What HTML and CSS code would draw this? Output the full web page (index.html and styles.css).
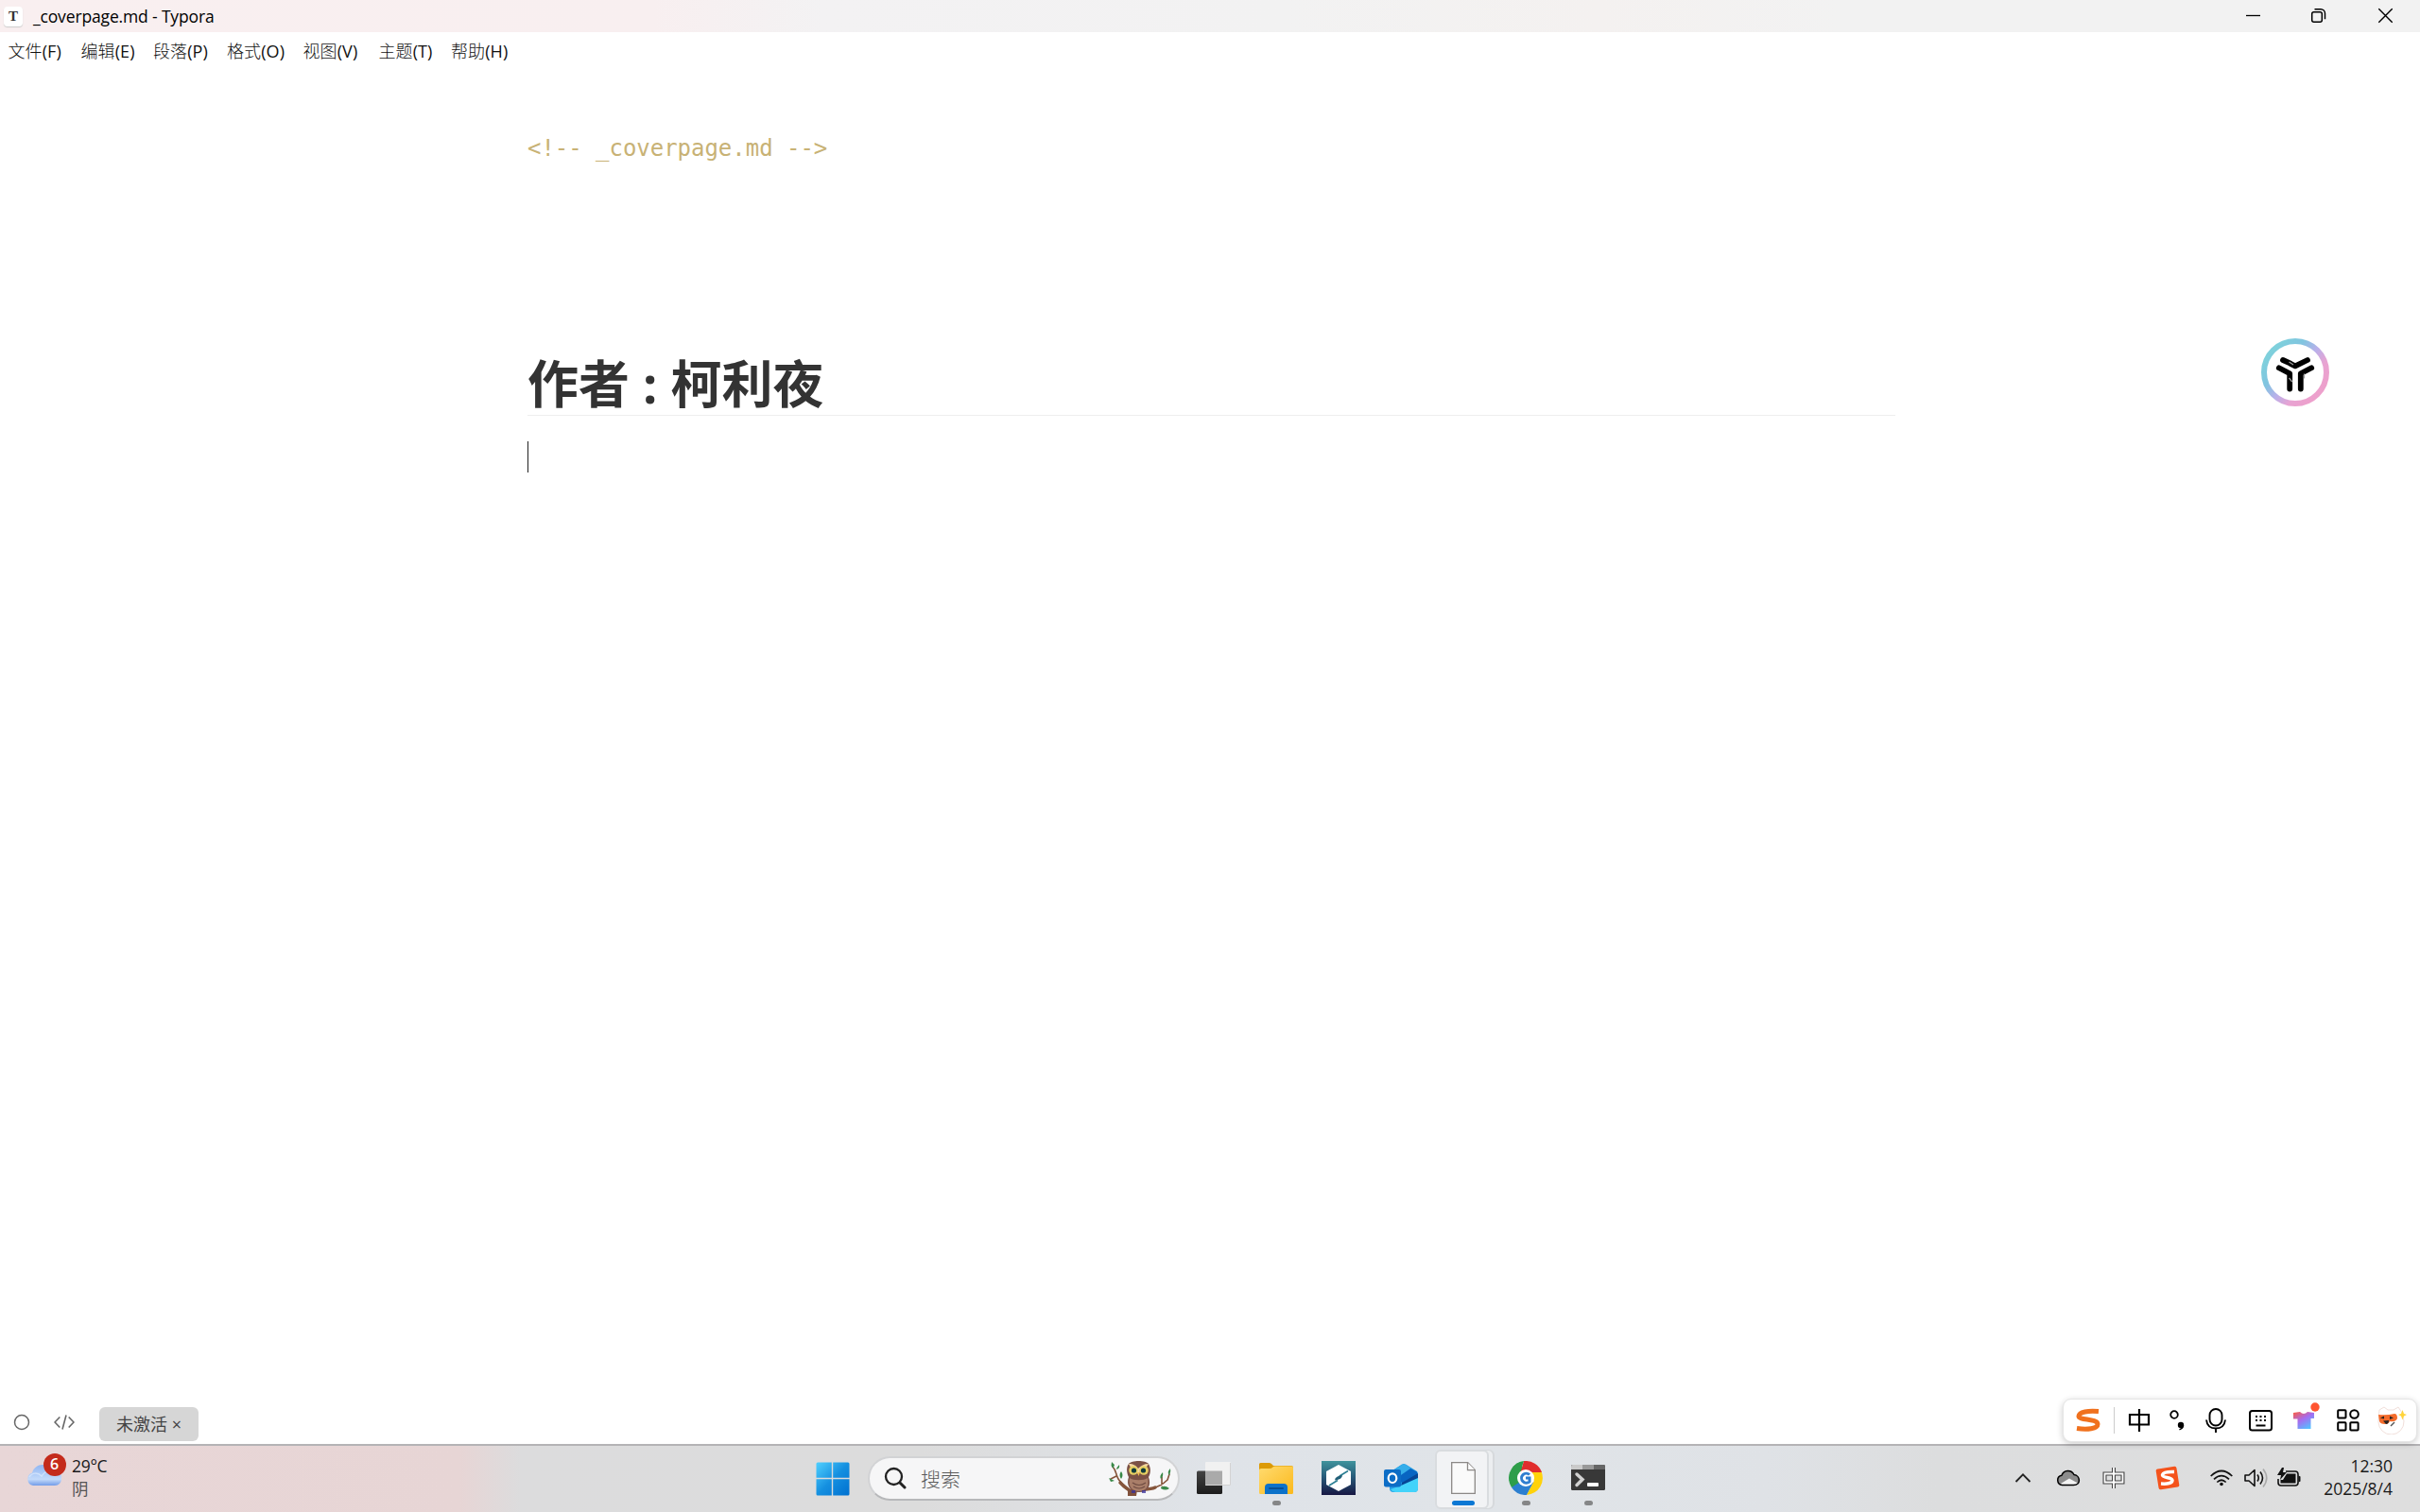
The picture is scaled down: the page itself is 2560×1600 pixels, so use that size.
FILE: index.html
```html
<!DOCTYPE html>
<html lang="zh-CN">
<head>
<meta charset="utf-8">
<title>_coverpage.md - Typora</title>
<link rel="stylesheet" href="styles.css">
</head>
<body>
<div class="screen">
  <header class="titlebar">
    <span class="app-icon">T</span>
    <span class="title">_coverpage.md - Typora</span>
    <div class="window-controls">
      <svg width="70" height="34" viewBox="0 0 70 34"><path d="M27 16.500h15" stroke="#000" stroke-width="1.300"/></svg>
      <svg width="71" height="34" viewBox="0 0 71 34" fill="none" stroke="#000" stroke-width="1.500"><rect x="26.700" y="12.700" width="10.600" height="10.600" rx="2"/><path d="M29.500 9.800h6.500a4.500 4.500 0 0 1 4.500 4.500v6"/></svg>
      <svg width="70" height="34" viewBox="0 0 70 34"><path d="M26.300 9.300l14.400 14.400m0-14.400l-14.400 14.400" stroke="#000" stroke-width="1.400"/></svg>
    </div>
  </header>
  <nav class="menu">
    <span>文件(F)</span><span>编辑(E)</span><span>段落(P)</span><span>格式(O)</span><span>视图(V)</span><span>主题(T)</span><span>帮助(H)</span>
  </nav>
  <main class="editor">
    <article class="page">
      <div class="comment">&lt;!-- _coverpage.md --&gt;</div>
      <h1>作者 : 柯利夜</h1>
      <div class="caret"></div>
    </article>
    <svg class="assistant" width="72" height="72" viewBox="0 0 72 72" fill="none">
      <defs><linearGradient id="ring" x1="0.1" y1="0.2" x2="0.85" y2="0.85"><stop offset="0" stop-color="#7fd0dc"/><stop offset=".28" stop-color="#80c4e0"/><stop offset=".52" stop-color="#b9b0ea"/><stop offset=".76" stop-color="#e8a3d2"/><stop offset="1" stop-color="#eda0cc"/></linearGradient></defs>
      <circle cx="36" cy="36" r="33" stroke="url(#ring)" stroke-width="6"/>
      <g stroke="#000" stroke-width="5.800" stroke-linecap="round" stroke-linejoin="round">
        <path d="M23 23L31 26.700M49 23L36 29.300L31 26.800"/>
        <path d="M18.800 31.300L30.200 37.300V53.500"/>
        <path d="M53.200 31.300L41.800 37.300V53.500"/>
      </g>
      <path d="M29.500 25l4.500 3M29.500 42l3.200 4M45.500 37.500v5" stroke="#999" stroke-width="1.300"/>
    </svg>
  </main>
  <footer class="status">
    <svg class="outline-icon" width="18" height="18" viewBox="0 0 18 18"><circle cx="9" cy="9" r="7.500" fill="none" stroke="#666" stroke-width="1.500"/></svg>
    <svg class="source-icon" width="22" height="18" viewBox="0 0 22 18" fill="none" stroke="#666" stroke-width="1.600"><path d="M6.300 3.500L1 9l5.300 5.500M15.700 3.500L21 9l-5.300 5.500M13 1.500L9 16.500"/></svg>
    <span class="license">未激活 <i>×</i></span>
  </footer>
  <div class="taskbar">
    <div class="weather">
      <svg width="40" height="38" viewBox="0 0 40 38">
        <defs><linearGradient id="cloud" x1="0" y1="0" x2="0" y2="1"><stop offset="0" stop-color="#8fb5f2"/><stop offset=".7" stop-color="#c3dafa"/><stop offset="1" stop-color="#729ce8"/></linearGradient></defs>
        <path d="M7 36a7 7 0 0 1-1-13.500C9 12 22 11 26 20c7-2 12 3 11 9 0 4-3 7-7 7z" fill="url(#cloud)"/>
        <path d="M3 27c3-5 9-5 13-1 3-5 9-7 14-5" fill="none" stroke="#dbeafd" stroke-width="1.500" opacity=".7"/>
      </svg>
      <b class="badge">6</b>
      <div class="weather-text"><span>29°C</span><span class="cond">阴</span></div>
    </div>
    <div class="apps">
      <svg class="start" width="36" height="36" viewBox="0 0 36 36">
        <defs><linearGradient id="win" x1="0" y1="0" x2="1" y2="1"><stop offset="0" stop-color="#4fd0ff"/><stop offset=".5" stop-color="#1590e0"/><stop offset="1" stop-color="#0070d0"/></linearGradient></defs>
        <path d="M2 .5h14.800v16.300H.5V2A1.500 1.500 0 0 1 2 .5zM18.200 .5H34A1.500 1.500 0 0 1 35.500 2v14.800H18.200zM.5 18.200h16.300v17.300H2A1.500 1.500 0 0 1 .5 34zM18.200 18.200h17.300V34a1.500 1.500 0 0 1-1.500 1.500H18.200z" fill="url(#win)"/>
      </svg>
      <div class="search">
        <svg width="24" height="24" viewBox="0 0 24 24" fill="none" stroke="#222" stroke-linecap="round"><circle cx="10.500" cy="10.500" r="8.500" stroke-width="2.300"/><path d="M17 17l5 5" stroke-width="3"/></svg>
        <span>搜索</span>
        <svg class="owl" width="68" height="38" viewBox="0 0 68 38">
          <g fill="none" stroke="#85553b" stroke-linecap="round"><path d="M5 7c4 4 3 8 6 13s9 8 14 14" stroke-width="1.600"/><path d="M22 34c5-4 14-1 22-3s13-4 19-10l2-6M57 27V18M9 17L3 20" stroke-width="1.600"/><path d="M13 24c4 5 7 6 13 10M24 34c8-5 18-1 26-5" stroke-width="3.500"/></g>
          <path d="M21 31h10l-1 7h-9z" fill="#80513c"/>
          <path d="M22 4c3-4 18-4 21 0 3 5 2 11 0 14 3 8 0 16-10 16S19 26 22 18c-2-4-3-10 0-14z" fill="#7b5145"/>
          <path d="M23 19c4 3 15 3 19 0 2 9-2 14-9 14s-12-5-10-14z" fill="#a97e69"/><path d="M26 24q7 5 14 0M27 28q6 4 12 0" stroke="#6f4c42" fill="none" stroke-width="1.200"/>
          <path d="M22 4c5 0 8 2 10 5 3-3 6-5 11-5-2 4-5 5-7 6l-4 5-4-5c-3-1-5-3-6-6z" fill="#f4d7a5"/>
          <circle cx="27" cy="11" r="4.800" fill="#e6cf62"/><circle cx="38" cy="11" r="4.800" fill="#e6cf62"/><circle cx="27.500" cy="11" r="2.600" fill="#123b3b"/><circle cx="37.500" cy="11" r="2.600" fill="#123b3b"/><path d="M31 13h3l-1.500 4z" fill="#f0c050"/>
          <path d="M26 32v3m2-3v3m9-3v3m2-3v3" stroke="#39309c" stroke-width="1.500"/>
          <g fill="#398848"><path d="M4 2l3 3-1.500 4-2-3zM12 5q-3 3-3 5 4-1 3-5zM14 12q-3 4 0 8 3-4 0-8zM1 19l6 3-4 1zM58 13q-4 4-2 7 3-3 2-7zM66 9q-4 4-1 7 2-4 1-7zM56 29q4-3 9 1-4 3-9 0z"/></g>
        </svg>
      </div>
      <div class="app"><svg width="36" height="36" viewBox="0 0 36 36"><defs><linearGradient id="tv" x1="0" y1="0" x2="0" y2="1"><stop stop-color="#444"/><stop offset="1" stop-color="#1c1c1c"/></linearGradient></defs><rect x="0" y="10.500" width="27" height="24.500" rx="1.500" fill="url(#tv)"/><rect x="9" y="1" width="27" height="25" rx="1" fill="#f1f1f1"/><path d="M9 10.500h18V26H9z" fill="#aaa"/><path d="M9.500 25.500h26V2" stroke="#d3d3d3" fill="none"/></svg></div>
      <div class="app running"><svg width="36" height="36" viewBox="0 0 36 36"><defs><linearGradient id="fold" x1="0" y1="0" x2="1" y2="1"><stop stop-color="#ffdb70"/><stop offset="1" stop-color="#fbb91c"/></linearGradient></defs><path d="M0 3.500Q0 2 1.500 2h9q1.500 0 2.500 1l2 2h19q2 0 2 2v8H0z" fill="#dc9a06"/><path d="M0 9.500Q0 8 2 8h9q2 0 3.500-1.500T18 5.500h16.500q1.500 0 1.500 1.500v26.500q0 1.500-1.500 1.500h-33Q0 35 0 33.500z" fill="url(#fold)"/><path d="M6 35v-7q0-4 4-4h16q4 0 4 4v7z" fill="#0c72c9"/><path d="M11 29h14" stroke="#074f94" stroke-width="2" stroke-linecap="round"/></svg></div>
      <div class="app"><svg width="36" height="36" viewBox="0 0 36 36"><defs><linearGradient id="teal" x1="0" y1="0" x2="0" y2="1"><stop stop-color="#3f939c"/><stop offset=".45" stop-color="#285d7b"/><stop offset="1" stop-color="#171743"/></linearGradient></defs><path d="M0 0h36v36H0z" fill="url(#teal)"/><path d="M18 4l13 7v14l-13 7-13-7V11z" fill="#fff"/><path d="M8 26l9-5.500M28 10.500L19 16" fill="none" stroke="#2b7f93" stroke-width="1.600"/><path d="M14 20.500q0-4.500 8-5.500 0 4.500-8 5.500z" fill="#226078"/></svg></div>
      <div class="app"><svg width="36" height="36" viewBox="0 0 36 36"><path d="M6 18V12L19 3.500q2-1 4 0L35 11q1 1 1 3v15q0 4-4 4H10q-4 0-4-4z" fill="#249fe5"/><path d="M7 12L19 4q2-1 4 0l6 4-17 12z" fill="#35aeea"/><path d="M15 17L28 8l7 3.500v4L20 25z" fill="#0865c2"/><path d="M19 23l17-10v8l-19 10z" fill="#064696"/><path d="M36 18v11q0 4-4 4H12q-3 0-5-3l11-4z" fill="#43d3fa"/><rect x="0" y="9" width="18" height="18.500" rx="2" fill="#0c6dc6"/><ellipse cx="9" cy="18.200" rx="4.300" ry="4.800" fill="none" stroke="#fff" stroke-width="2.200"/></svg></div>
      <div class="app active running"><svg width="26" height="34" viewBox="0 0 26 34"><path d="M.7.7h17l7.600 7.800v24.800H.7z" fill="#fafafa" stroke="#8b8886" stroke-width="1.300"/><path d="M17.500.7v8h8" fill="#fff" stroke="#8b8886" stroke-width="1.300"/></svg></div>
      <div class="app running"><svg width="36" height="36" viewBox="0 0 36 36"><path d="M18 18L12.300 1A18 18 0 0 0 3 28L9 27z" fill="#2e9e4a"/><path d="M18 18L3 28a18 18 0 0 0 16 8l7-13z" fill="#2c7fd0"/><path d="M17 10h17A18 18 0 0 1 19 36l8-15z" fill="#ffd20a"/><path d="M16 .1A18 18 0 0 1 35 12H18l-7 5z" fill="#e12d2d"/><path d="M4 7A18 18 0 0 1 16 .1L10 18z" fill="#2e9e4a"/><circle cx="18" cy="18" r="9" fill="#fff"/><path d="M22 14.500a5 5 0 1 0 0 7.300V18h-4" fill="none" stroke="#2f7ed0" stroke-width="3"/></svg></div>
      <div class="app running"><svg width="36" height="36" viewBox="0 0 36 36"><rect y="4" width="36" height="27" rx="1.500" fill="#383838"/><path d="M0 9V5.500Q0 4 1.500 4H12v5z" fill="#cacaca"/><path d="M12 4h12v5H12z" fill="#999"/><path d="M24 4h10.500Q36 4 36 5.500V9H24z" fill="#666"/><path d="M6 14l6 5.500-6 6" fill="none" stroke="#d2d2d2" stroke-width="3.500" stroke-linecap="round"/><rect x="17" y="23" width="12" height="4" rx="1" fill="#fff"/></svg></div>
    </div>
    <div class="tray">
      <svg width="18" height="12" viewBox="0 0 18 12"><path d="M1.500 10L9 2.300l7.500 7.700" fill="none" stroke="#222" stroke-width="1.800"/></svg>
      <svg class="t-cloud" width="26" height="20" viewBox="0 0 26 20"><path d="M6.500 17.500a5.200 5.200 0 0 1-.5-10.300C8 1.500 16 .8 19 6.500c7 1 7.500 11-.5 11z" fill="#8c8c8c"/><path d="M4 16.500l10-6 9 5q-2 2-5 2H7z" fill="#f4f4f4"/><path d="M6.500 17.500a5.200 5.200 0 0 1-.5-10.300C8 1.500 16 .8 19 6.500c7 1 7.500 11-.5 11z" fill="none" stroke="#000" stroke-width="1.500"/></svg>
      <svg class="t-ime" width="24" height="26" viewBox="0 0 24 26" fill="none"><path d="M2.500 8.500h19v9h-19zM12 2v22" stroke="#444" stroke-width="4"/><path d="M2.500 8.500h19v9h-19zM12 2v22" stroke="#fff" stroke-width="1.800"/></svg>
      <svg class="t-sogou" width="26" height="26" viewBox="0 0 26 26"><rect x="2" y="2" width="22" height="22" rx="2" transform="rotate(-9 13 13)" fill="#f4531c"/><path d="M20 6.500Q8 6 7.500 10c0 3 10 2 10.500 5.500 0 3-5 4-12 3.500" fill="none" stroke="#fff" stroke-width="3.500"/></svg>
      <svg class="t-wifi" width="24" height="20" viewBox="0 0 24 20" fill="none" stroke="#111" stroke-width="1.700"><path d="M.7 8Q12-3 23.300 8M4 11.300q8-7.500 16 0M7.300 14.500q4.700-4.500 9.400 0"/><circle cx="12" cy="16.500" r="1.800" fill="#111" stroke="none"/></svg>
      <svg class="t-vol" width="26" height="22" viewBox="0 0 26 22" fill="none" stroke="#111" stroke-width="1.600"><path d="M1 8h4l6-5.500v17L5 14H1z" stroke-linejoin="round"/><path d="M14 7.500q2.500 3.500 0 7M17 4.500q5 6.500 0 13"/><path d="M20 1.500q7.500 9.500 0 19" stroke="#aaa"/></svg>
      <svg class="t-bat" width="26" height="22" viewBox="0 0 26 22"><path d="M9 4h10q3 0 3 3v9q0 3-3 3H4q-3 0-3-3v-4" fill="none" stroke="#111" stroke-width="1.600"/><path d="M10 6.500h9.500v10h-16V13H6z" fill="#111"/><path d="M22.500 8.500l2 1v5l-2 1zM5 0L0 8h4l-1 5 7-8H6l1-5z" fill="#111"/></svg>
      <div class="clock"><span class="time">12:30</span><span class="date">2025/8/4</span></div>
    </div>
  </div>
  <div class="ime">
    <svg class="i-s" width="28" height="26" viewBox="0 0 28 26"><path d="M25 3.500C14 2.500 4.500 4 4 8.500 3.500 13 24 11 24 17c0 5-11 6-22 4.500" fill="none" stroke="#f0711e" stroke-width="5"/></svg>
    <i class="divider"></i>
    <svg class="i-zh" width="24" height="26" viewBox="0 0 24 26"><path d="M2 7h20v10.500H2zM12 1v24" fill="none" stroke="#000" stroke-width="2.200"/></svg>
    <svg class="i-punct" width="16" height="24" viewBox="0 0 16 24"><circle cx="5" cy="6" r="3.800" fill="none" stroke="#000" stroke-width="1.800"/><circle cx="12" cy="17" r="3.200"/><path d="M15.200 17q0 4-4.500 5.500l-.5-1.200q2.500-1 2.500-2.500z"/></svg>
    <svg class="i-mic" width="22" height="26" viewBox="0 0 22 26" fill="none" stroke="#000" stroke-width="1.900"><rect x="4.500" y="1" width="13" height="17.500" rx="6.500"/><path d="M1 12.500q1 9 10 9t10-9M11 21.500V26"/></svg>
    <svg class="i-kbd" width="25" height="24" viewBox="0 0 25 24"><rect x="1" y="2" width="23" height="20.500" rx="2.500" fill="none" stroke="#000" stroke-width="2"/><path d="M7 8h2m2.500 0h2M16 8h2M7 12h2m2.500 0h2m2.500 0h2M7.500 17.500h10" stroke="#000" stroke-width="1.800"/></svg>
    <svg class="i-shirt" width="28" height="29" viewBox="0 0 28 29"><defs><linearGradient id="shirt" x1="0" y1="0" x2=".7" y2="1"><stop stop-color="#ff5b3b"/><stop offset=".5" stop-color="#a56cf0"/><stop offset="1" stop-color="#55bfff"/></linearGradient></defs><path d="M7 10q4 4 8 0l7 1v6h-3.500v11h-14V17.500H0V11z" fill="url(#shirt)"/><circle cx="23" cy="5" r="4.700" fill="#ff5531"/></svg>
    <svg class="i-grid" width="24" height="24" viewBox="0 0 24 24" fill="none" stroke="#000" stroke-width="2"><rect x="1.200" y="1.200" width="8.300" height="8.300" rx=".8"/><circle cx="18.500" cy="5.500" r="4.300"/><rect x="1.200" y="14.200" width="8.300" height="8.300" rx=".8"/><rect x="14.300" y="14.200" width="8.300" height="8.300" rx=".8"/></svg>
    <svg class="i-face" width="32" height="32" viewBox="0 0 32 32"><path d="M2 18L3 6l5-3 4 3h6l5-3 4 6 2 9a13.500 13.500 0 0 1-27 1z" fill="#fff" stroke="#f1dfda"/><path d="M2 11q9 1 17-1 3 0 3 5-2 4-8 3-1 3-5 3-5 0-6-3z" fill="#f36b2b"/><path d="M4 14.500l4-2v3zM14 12.500l4 2-4 1.500M7 17.500l6-.5q0 4-3 4z" fill="#292321"/><path d="M19 19l-4 4" stroke="#555" stroke-width="1.500"/><path d="M27.500 6l1.500 4 3 1-3 1.500-1.500 4-1.500-4-3-1.500 3-1z" fill="#ffd43b"/></svg>
  </div>
</div>
</body>
</html>
```
FILE: styles.css
```css
* { box-sizing: border-box; }
body { margin: 0; background: #fff; font-family: "Open Sans", "Noto Sans CJK SC", sans-serif; color: #1a1a1a; }
svg { display: block; flex: none; }
.screen { width: 2560px; height: 1600px; display: flex; flex-direction: column; overflow: hidden; position: relative; }
.titlebar { height: 34px; flex: none; display: flex; align-items: center; padding-left: 4px; background: linear-gradient(90deg, #f9eff0 0, #f8eff0 27%, #f3f2f3 34%, #f2f2f2 53%, #f4f1f0 66%, #f2f2f2 76%, #f2f2f2 100%); }
.app-icon { width: 20px; height: 21px; border-radius: 4px; background: #fff; box-shadow: 0 1px 1px #ccc; font: bold 15px/20px "Liberation Serif", serif; text-align: center; color: #333; }
.title { margin-left: 11px; font-size: 17.500px; line-height: 35px; letter-spacing: -.15px; color: #000; white-space: nowrap; }
.window-controls { display: flex; margin-left: auto; }
.menu { height: 42px; flex: none; display: grid; grid-template-columns: 77px 76.500px 78px 80.500px 80px 76.500px 80px; padding-left: 8.500px; font-size: 18px; line-height: 41px; letter-spacing: .1px; white-space: nowrap; font-family: "Open Sans", "Noto Sans CJK SC Light", "Noto Sans CJK SC", sans-serif; color: #111; }
.editor { flex: 1; display: flex; padding-left: 558px; }
.page { width: 1447px; }
.comment { margin-top: 63px; font: 24px/36px "DejaVu Sans Mono", monospace; letter-spacing: -.03px; color: #c8b275; white-space: nowrap; }
h1 { margin: 199px 0 0; height: 66px; font: bold 54px/65px "Open Sans", "Noto Sans CJK SC", sans-serif; color: #333; border-bottom: 1px solid #eee; white-space: nowrap; }
.caret { width: 1px; height: 33px; margin-top: 27px; background: #222; }
.assistant { margin: 282px 0 0 387px; }
.status { height: 52px; flex: none; display: flex; align-items: flex-start; padding: 13px 0 0 14px; }
.status svg { margin-top: 7px; }
.source-icon { margin-left: 25px; }
.license { margin-left: 26px; width: 105px; height: 36px; border-radius: 6px; background: #d6d6d6; color: #444; font-size: 18px; line-height: 36px; padding-left: 18px; white-space: nowrap; }
.license i { font-style: normal; }
.taskbar { height: 72px; flex: none; display: flex; border-top: 2px solid #b4b3b5; background: linear-gradient(90deg, #e8d6d7 0, #e7d5d5 19%, #dcdcdd 21.500%, #dcdcdc 38%, #dfe3e8 50%, #e0e4e8 62%, #dfe2e6 73%, #dcddde 80%, #dedede 100%); }
.weather { position: relative; width: 863px; flex: none; display: flex; padding: 6px 0 0 28px; }
.badge { position: absolute; left: 45.500px; top: 7.500px; width: 24px; height: 24px; border-radius: 50%; background: #c42b1c; color: #fff; font: 600 16px/23px "Open Sans", sans-serif; text-align: center; }
.weather-text { display: flex; flex-direction: column; margin: 3px 0 0 8px; font-size: 17.500px; line-height: 24px; letter-spacing: -.3px; }
.cond { color: #555; }
.apps { width: 850px; flex: none; display: flex; }
.start { margin: 16.500px 19px 0 0; }
.search { width: 330px; height: 47px; margin-top: 10.500px; border-radius: 24px; background: #f6f6f7; border: 2px solid #d2d3d5; border-bottom-color: #b7b8ba; display: flex; align-items: center; padding: 0 6px 1px 15px; flex: none; }
.search span { margin-left: 15px; font-size: 21px; color: #5b5b5b; font-weight: 300; }
.owl { margin-left: auto; }
.app { width: 66px; height: 70px; position: relative; flex: none; display: flex; justify-content: center; padding-top: 16px; }
.search + .app { margin-left: 3px; }
.running::after { content: ""; position: absolute; left: 29px; top: 58px; width: 9px; height: 5px; border-radius: 3px; background: #858687; }
.active > svg { z-index: 1; margin-top: 1px; }
.active::before { content: ""; position: absolute; left: 3px; top: 4px; width: 53px; height: 59px; border-radius: 6px; background: #f2f3f5; border: 2px solid #d9dcdf; box-shadow: 5px 0 0 -1px #eceef0, 6px 0 0 0 #d6d9dc; }
.active::after { left: 21px; width: 24px; background: #0b78d4; }
.tray { display: flex; flex: none; align-items: center; padding: 0 0 2px 418px; width: 847px; }
.t-cloud { margin-left: 26px; }
.t-ime { margin-left: 23px; }
.t-sogou { margin-left: 32px; }
.t-wifi { margin-left: 32px; }
.t-vol { margin-left: 12px; }
.t-bat { margin-left: 9px; }
.clock { margin: -2px 29px 0 auto; display: flex; flex-direction: column; align-items: flex-end; font-size: 17.500px; line-height: 24px; letter-spacing: 0; white-space: nowrap; }
.ime { position: absolute; left: 2182px; top: 1480px; width: 375px; height: 46px; border-radius: 9px; background: #fff; border: 1px solid #e5e5e5; box-shadow: 0 2px 7px rgba(0,0,0,.2); display: flex; align-items: center; padding: 0 0 0 12px; }
.divider { width: 1px; height: 28px; margin-left: 13px; background: #ccc; }
.i-zh { margin-left: 14px; }
.i-punct { margin-left: 20px; }
.i-mic { margin-left: 22px; }
.i-kbd { margin-left: 24px; }
.i-shirt { margin: -9px 0 0 22px; }
.i-grid { margin-left: 18px; }
.i-face { margin: -2px 0 0 18px; }
```
